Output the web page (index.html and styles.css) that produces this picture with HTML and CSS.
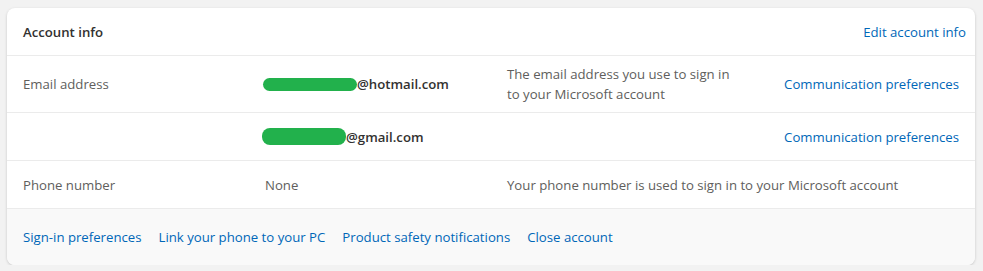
FILE: index.html
```html
<!DOCTYPE html>
<html lang="en">
<head>
<meta charset="UTF-8">
<meta name="viewport" content="width=device-width,initial-scale=1">
<title>Account info</title>
<link rel="stylesheet" href="styles.css">
</head>
<body>

<!-- ===== account info card ===== -->
<section class="card">
  <header class="card-head">
    <h2>Account info</h2>
    <a href="#" class="link">Edit account info</a>
  </header>

  <div class="row">
    <span class="label">Email address</span>
    <span class="value"><span class="blot blot-a"></span>@hotmail.com</span>
    <span class="desc">The email address you use to sign in to your Microsoft account</span>
    <a href="#" class="link action">Communication preferences</a>
  </div>

  <div class="row">
    <span class="label"></span>
    <span class="value"><span class="blot blot-b"></span>@gmail.com</span>
    <span class="desc"></span>
    <a href="#" class="link action">Communication preferences</a>
  </div>

  <div class="row">
    <span class="label">Phone number</span>
    <span class="value plain">None</span>
    <span class="desc wide">Your phone number is used to sign in to your Microsoft account</span>
  </div>

  <footer class="card-foot">
    <a href="#" class="link">Sign-in preferences</a>
    <a href="#" class="link">Link your phone to your PC</a>
    <a href="#" class="link">Product safety notifications</a>
    <a href="#" class="link">Close account</a>
  </footer>
</section>

</body>
</html>
```

FILE: styles.css
```css
:root{
  --bg:#f2f2f2;--card:#fff;--fg:#323130;--muted:#605e5c;
  --accent:#0067b8;--line:#ebebeb;--foot:#f9f9f9;--blot:#22b14c;
}
*{box-sizing:border-box;margin:0;padding:0}
body{font:13.2px/20px "Open Sans","Noto Sans",sans-serif;background:var(--bg);
     color:var(--fg);padding:8px 8px 0 7px}
a{text-decoration:none}
.link{color:var(--accent)}

.card{width:968px;background:var(--card);border-radius:8px;overflow:hidden;
      box-shadow:0 1px 3px rgba(0,0,0,.18)}
.card-head{display:flex;justify-content:space-between;align-items:center;
           height:48px;padding:0 9px 0 16px;border-bottom:1px solid var(--line)}
.card-head h2{font-size:13.2px;font-weight:600}

.row{display:grid;grid-template-columns:226px 226px 226px 1fr;column-gap:16px;
     align-items:center;min-height:48px;padding:8px 16px;
     border-bottom:1px solid var(--line)}
.label,.desc{color:var(--muted)}
.value{font-weight:600;display:flex;align-items:center}
.value.plain{font-weight:400;color:var(--muted)}
.desc.wide{grid-column:3 / 5}
.action{justify-self:end}

.blot{display:inline-block;background:var(--blot);border-radius:7px}
.blot-a{width:94px;height:13px;margin-left:-2px}
.blot-b{width:84px;height:17px;border-radius:8px;margin-left:-3px}

.card-foot{display:flex;gap:17px;align-items:center;height:56px;
           padding:0 16px;background:var(--foot)}
```
